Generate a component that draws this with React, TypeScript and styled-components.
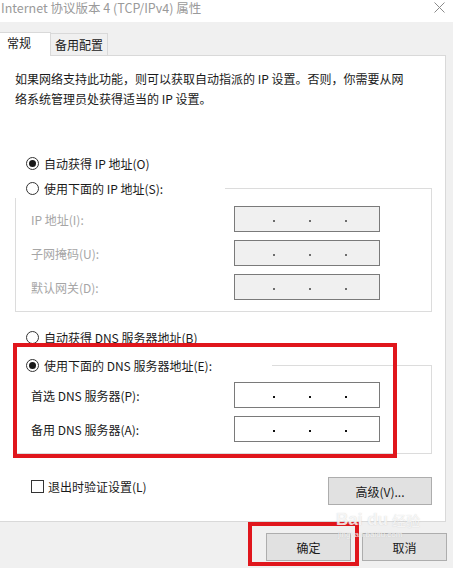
import React from 'react'
import styled, { createGlobalStyle } from 'styled-components'

const GlobalStyle = createGlobalStyle`
  html, body {
    margin: 0;
    padding: 0;
    background: #f0f0f0;
  }
  body {
    font-family: "Noto Sans CJK SC", "Noto Sans", sans-serif;
    font-size: 12px;
    color: #1a1a1a;
  }
`

const Window = styled.div`
  position: relative;
  width: 453px;
  height: 568px;
  overflow: hidden;
  background: #f0f0f0;
  display: flex;
  flex-direction: column;
`

const TitleBar = styled.div`
  height: 22px;
  background: #fff;
  display: flex;
  justify-content: space-between;
  align-items: flex-start;
  padding: 0 8px 0 1px;
  box-sizing: border-box;
  flex-shrink: 0;
`

const Title = styled.span`
  font-size: 12.5px;
  line-height: 15px;
  color: #9a9a9a;
`

const CloseIcon = styled.svg`
  margin-top: 2px;
`

const TabStrip = styled.div`
  height: 33px;
  display: flex;
  align-items: flex-end;
  flex-shrink: 0;
`

const Tab = styled.div<{ $active?: boolean }>`
  position: relative;
  z-index: 1;
  box-sizing: border-box;
  width: ${(p) => (p.$active ? 51 : 57)}px;
  height: ${(p) => (p.$active ? 24 : 22)}px;
  margin-bottom: ${(p) => (p.$active ? -1 : 0)}px;
  background: ${(p) => (p.$active ? '#fff' : '#f0f0f0')};
  border-top: 1px solid #d9d9d9;
  border-right: 1px solid #d9d9d9;
  padding: ${(p) => (p.$active ? '2px 0 0 7px' : '3px 0 0 4px')};
  line-height: 16px;
  color: #1a1a1a;
`

const Panel = styled.div`
  box-sizing: border-box;
  width: 446px;
  height: 467px;
  background: #fff;
  border-top: 1px solid #d9d9d9;
  border-right: 1px solid #d9d9d9;
  border-bottom: 1px solid #d9d9d9;
  padding: 13px 0 0 15px;
  display: flex;
  flex-direction: column;
  flex-shrink: 0;
`

const Description = styled.p`
  margin: 0;
  line-height: 20px;
  white-space: nowrap;
`

const RadioRow = styled.label<{ $top?: number; $legend?: number }>`
  display: flex;
  align-items: center;
  gap: 5px;
  height: 20px;
  margin-top: ${(p) => p.$top ?? 0}px;
  padding-left: 11px;
  ${(p) =>
    p.$legend
      ? `
    width: ${p.$legend}px;
    margin-left: -1px;
    background: #fff;
    box-sizing: border-box;
  `
      : ''}
`

const RadioCircle = styled.span<{ $checked?: boolean }>`
  box-sizing: border-box;
  width: 13px;
  height: 13px;
  border: 1px solid #333;
  border-radius: 50%;
  background: #fff;
  display: flex;
  align-items: center;
  justify-content: center;
  flex-shrink: 0;

  &::after {
    content: '';
    display: ${(p) => (p.$checked ? 'block' : 'none')};
    width: 7px;
    height: 7px;
    border-radius: 50%;
    background: #1a1a1a;
  }
`

const Group = styled.div<{ $top: number }>`
  box-sizing: border-box;
  width: 417px;
  margin-top: ${(p) => p.$top}px;
  border: 1px solid #dcdcdc;
  padding: 0 0 11px 0;
  display: flex;
  flex-direction: column;

  & > ${RadioRow} {
    margin-top: -11px;
  }
`

const FieldRow = styled.div<{ $top: number }>`
  display: flex;
  align-items: center;
  margin-top: ${(p) => p.$top}px;
  padding-left: 15px;
`

const FieldLabel = styled.span<{ $disabled?: boolean }>`
  width: 203px;
  color: ${(p) => (p.$disabled ? '#a6a6a6' : '#1a1a1a')};
`

const IpBox = styled.div<{ $disabled?: boolean }>`
  box-sizing: border-box;
  width: 146px;
  height: 26px;
  border: 1px solid #7a7a7a;
  background: ${(p) => (p.$disabled ? '#f0f0f0' : '#fff')};
  display: flex;
  align-items: center;
  padding-left: 4px;
`

const Octet = styled.span`
  width: 34px;
`

const Dot = styled.span<{ $disabled?: boolean }>`
  width: 2px;
  height: 2px;
  margin-top: 3px;
  background: ${(p) => (p.$disabled ? '#6d6d6d' : '#111')};
`

const BottomRow = styled.div`
  width: 417px;
  margin-top: 23px;
  display: flex;
  justify-content: space-between;
  align-items: flex-start;
`

const CheckRow = styled.label`
  display: flex;
  align-items: center;
  gap: 4px;
  margin-top: 2px;
  padding-left: 16px;
  height: 14px;
`

const CheckBox = styled.span`
  box-sizing: border-box;
  width: 13px;
  height: 13px;
  border: 1px solid #333;
  background: #fff;
`

const Button = styled.button<{ $width: number }>`
  box-sizing: border-box;
  width: ${(p) => p.$width}px;
  height: 28px;
  background: #e1e1e1;
  border: 1px solid #adadad;
  font-family: inherit;
  font-size: 12px;
  color: #1a1a1a;
  padding: 0;
`

const ButtonBar = styled.div`
  flex: 1;
  display: flex;
  justify-content: flex-end;
  gap: 11px;
  padding: 11px 6px 0 0;
`

const Highlight = styled.div<{ $x: number; $y: number; $w: number; $h: number }>`
  position: absolute;
  left: ${(p) => p.$x}px;
  top: ${(p) => p.$y}px;
  width: ${(p) => p.$w}px;
  height: ${(p) => p.$h}px;
  box-sizing: border-box;
  border: 4px solid #e0161c;
  pointer-events: none;
`

const Watermark = styled.div`
  position: absolute;
  left: 336px;
  top: 510px;
  width: 86px;
  display: flex;
  flex-direction: column;
  align-items: flex-start;
  color: rgba(255, 255, 255, 0.8);
  text-shadow: 0 0 1px rgba(160, 160, 160, 0.5);
  pointer-events: none;
`

const WatermarkTop = styled.div`
  display: flex;
  align-items: flex-end;
  font-family: "Liberation Sans", Arial, sans-serif;
  font-size: 17px;
  font-weight: bold;
  line-height: 20px;
`

const WatermarkCn = styled.span`
  font-family: "Noto Sans CJK SC", sans-serif;
  font-size: 14px;
  font-weight: normal;
  margin-left: 4px;
`

const WatermarkUrl = styled.span`
  font-family: "Liberation Sans", Arial, sans-serif;
  font-size: 8px;
  line-height: 10px;
  margin-left: 2px;
`

const IpField = ({ disabled }: { disabled?: boolean }) => (
  <IpBox $disabled={disabled}>
    <Octet />
    <Dot $disabled={disabled} />
    <Octet />
    <Dot $disabled={disabled} />
    <Octet />
    <Dot $disabled={disabled} />
  </IpBox>
)

const Radio = ({ checked, children, top, legend }: { checked?: boolean; children: React.ReactNode; top?: number; legend?: number }) => (
  <RadioRow $top={top} $legend={legend}>
    <RadioCircle $checked={checked} />
    <span>{children}</span>
  </RadioRow>
)

const App = () => {
  return (
    <Window>
      <GlobalStyle />
      <TitleBar>
        <Title>Internet 协议版本 4 (TCP/IPv4) 属性</Title>
        <CloseIcon width="11" height="11" viewBox="0 0 11 11">
          <path d="M0.5 0.5 L10.5 10.5 M10.5 0.5 L0.5 10.5" stroke="#8a8a8a" strokeWidth="1" fill="none" />
        </CloseIcon>
      </TitleBar>

      <TabStrip>
        <Tab $active>常规</Tab>
        <Tab>备用配置</Tab>
      </TabStrip>

      <Panel>
        <Description>
          如果网络支持此功能，则可以获取自动指派的 IP 设置。否则，你需要从网
          <br />
          络系统管理员处获得适当的 IP 设置。
        </Description>

        <Radio checked top={44}>自动获得 IP 地址(O)</Radio>

        <Group $top={15}>
          <Radio legend={210}>使用下面的 IP 地址(S):</Radio>
          <FieldRow $top={8}>
            <FieldLabel $disabled>IP 地址(I):</FieldLabel>
            <IpField disabled />
          </FieldRow>
          <FieldRow $top={8}>
            <FieldLabel $disabled>子网掩码(U):</FieldLabel>
            <IpField disabled />
          </FieldRow>
          <FieldRow $top={8}>
            <FieldLabel $disabled>默认网关(D):</FieldLabel>
            <IpField disabled />
          </FieldRow>
        </Group>

        <Radio top={15}>自动获得 DNS 服务器地址(B)</Radio>

        <Group $top={18}>
          <Radio checked legend={257}>使用下面的 DNS 服务器地址(E):</Radio>
          <FieldRow $top={7}>
            <FieldLabel>首选 DNS 服务器(P):</FieldLabel>
            <IpField />
          </FieldRow>
          <FieldRow $top={8}>
            <FieldLabel>备用 DNS 服务器(A):</FieldLabel>
            <IpField />
          </FieldRow>
        </Group>

        <BottomRow>
          <CheckRow>
            <CheckBox />
            <span>退出时验证设置(L)</span>
          </CheckRow>
          <Button $width={104}>高级(V)...</Button>
        </BottomRow>
      </Panel>

      <ButtonBar>
        <Button $width={85}>确定</Button>
        <Button $width={85}>取消</Button>
      </ButtonBar>

      <Highlight $x={13} $y={343} $w={384} $h={115} />
      <Highlight $x={248} $y={522} $w={111} $h={44} />

      <Watermark>
        <WatermarkTop>
          Bai du<WatermarkCn>经验</WatermarkCn>
        </WatermarkTop>
        <WatermarkUrl>jingyan.baidu.com</WatermarkUrl>
      </Watermark>
    </Window>
  )
}

export default App
